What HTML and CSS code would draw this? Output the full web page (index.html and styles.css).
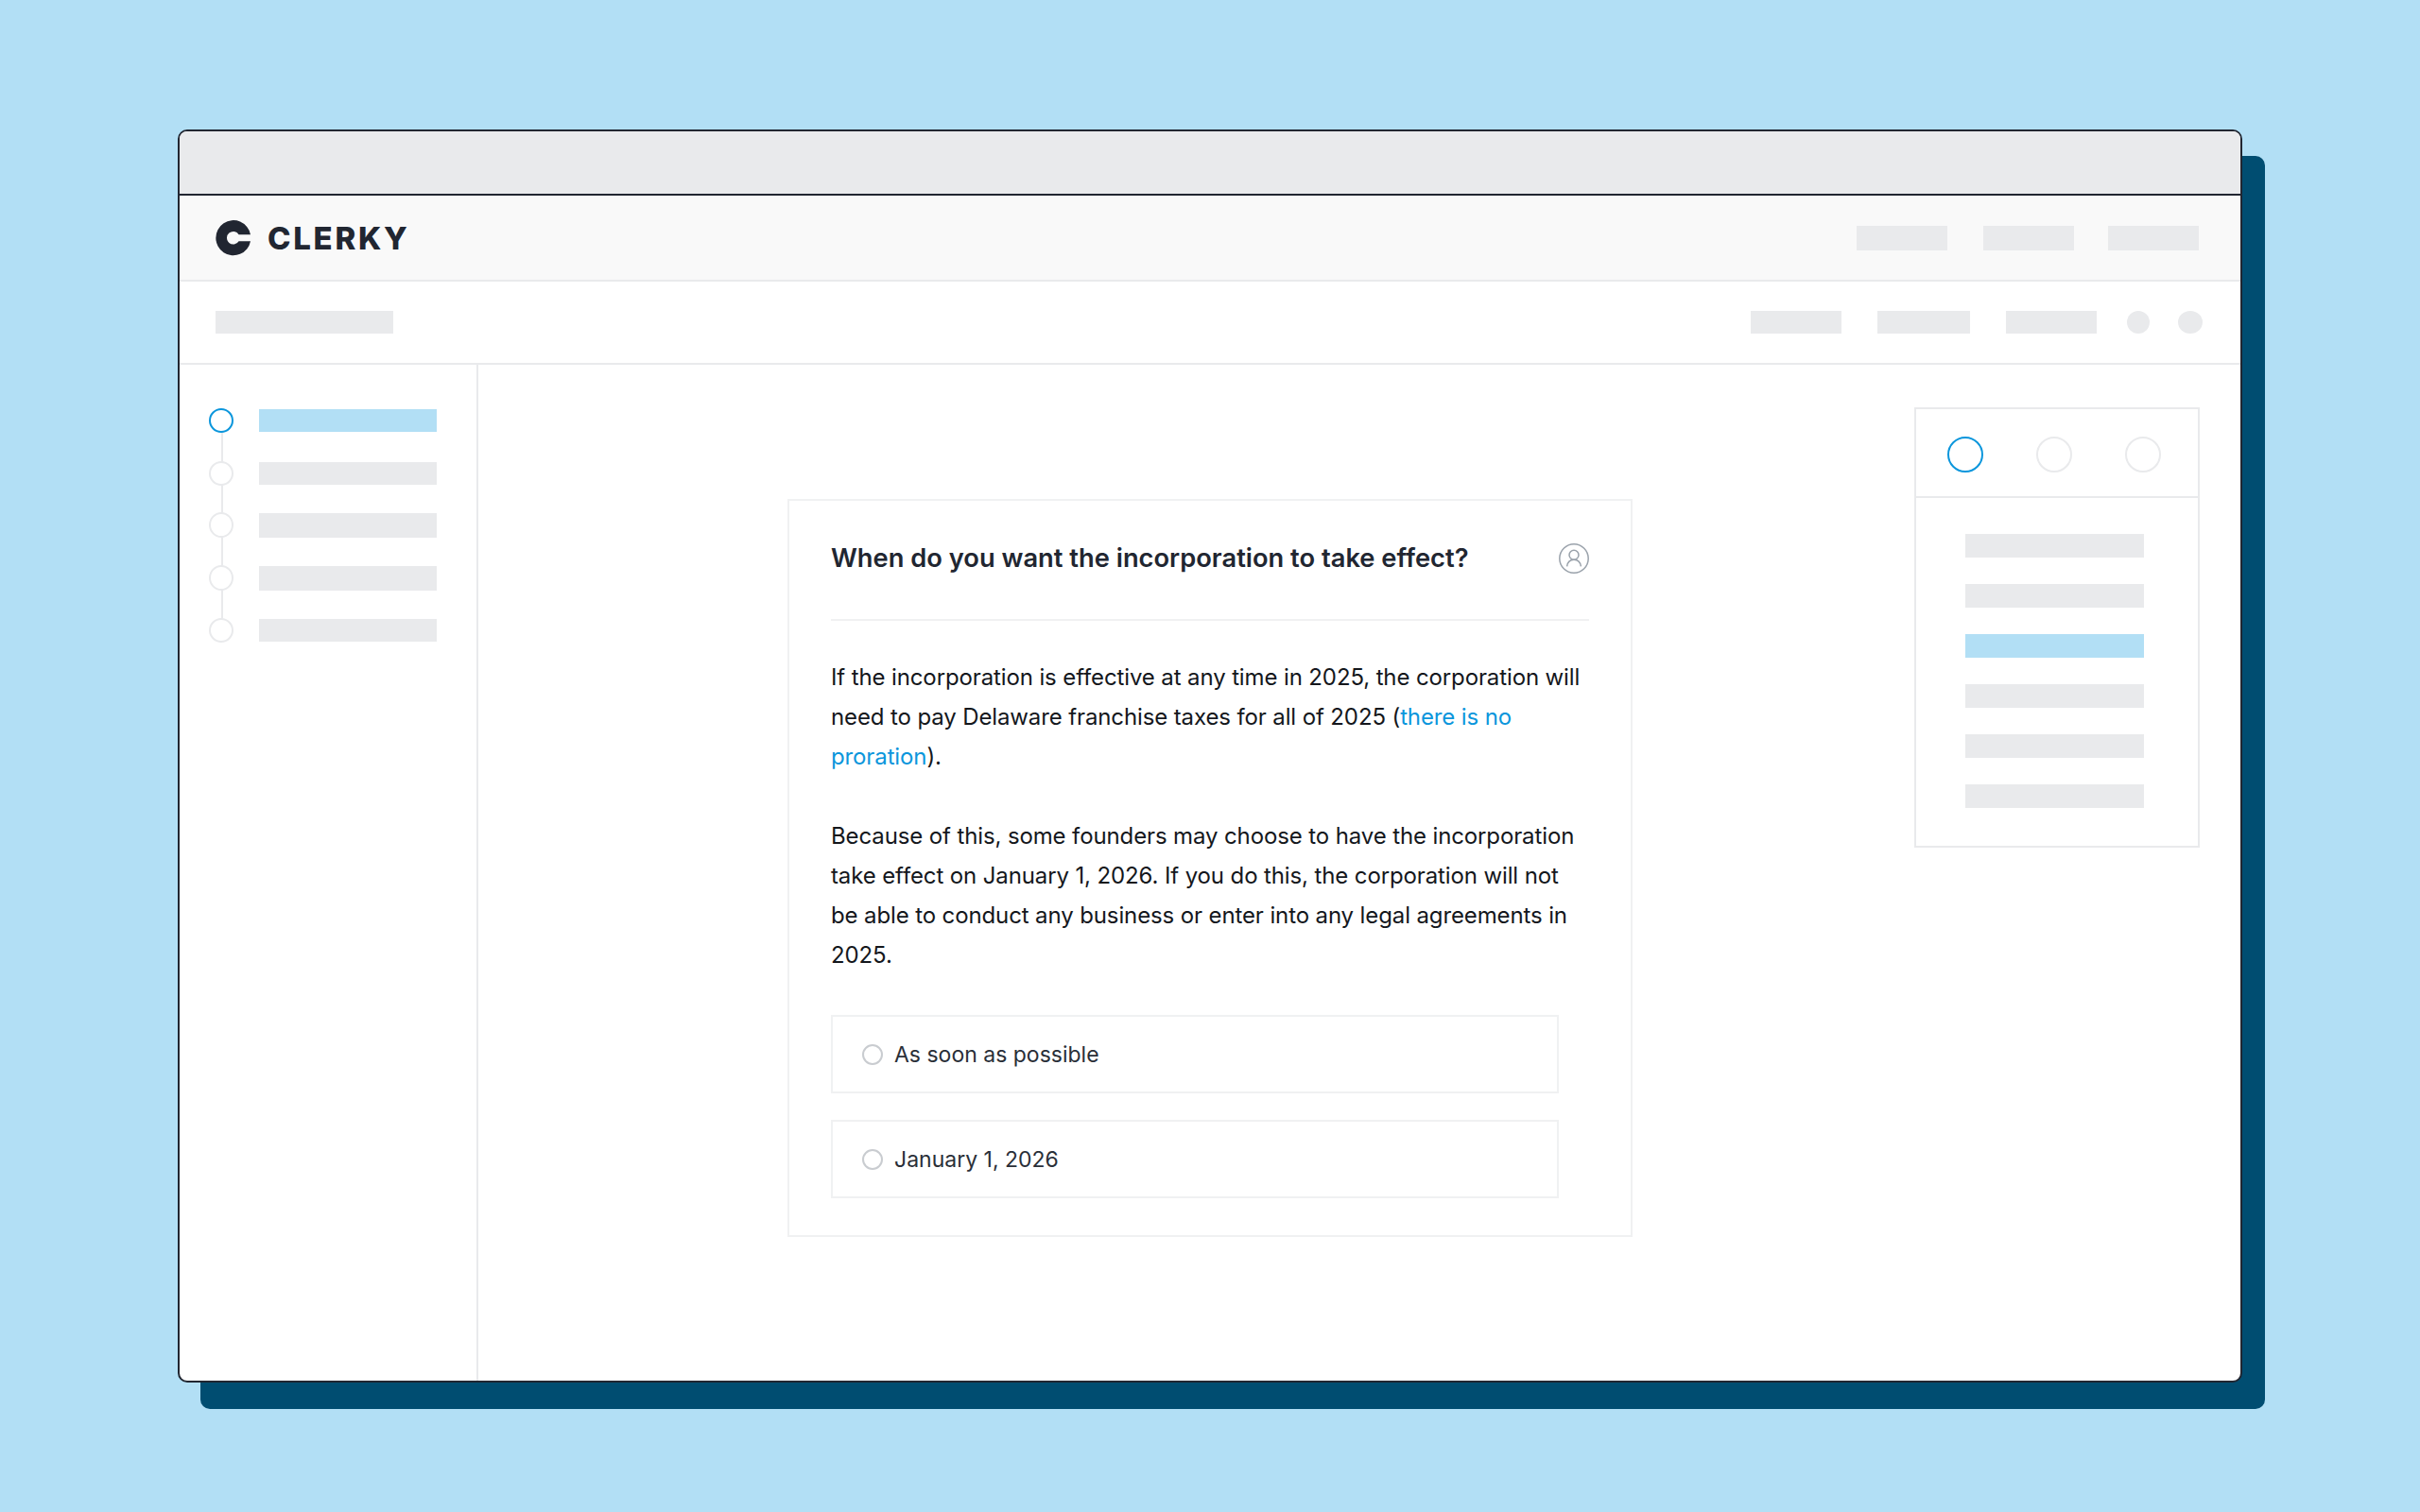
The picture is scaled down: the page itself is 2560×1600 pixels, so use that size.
FILE: index.html
```html
<!DOCTYPE html>
<html lang="en">
<head>
<meta charset="utf-8">
<title>Clerky</title>
<link rel="stylesheet" href="styles.css">
</head>
<body>
<div class="window">
  <div class="titlebar"></div>
  <header class="nav">
    <div class="brand">
      <svg class="logo" viewBox="0 0 37 38" width="37" height="38" aria-hidden="true">
        <path fill-rule="evenodd" d="M37 15.2A18.5 18.6 0 1 0 37 22.2H24.6A6.8 6.8 0 1 1 24.6 15.2Z" fill="#212631"/>
      </svg>
      <span class="wordmark">CLERKY</span>
    </div>
    <div class="nav-bars">
      <span class="bar bar-nav"></span>
      <span class="bar bar-nav"></span>
      <span class="bar bar-nav"></span>
    </div>
  </header>
  <div class="subnav">
    <span class="bar bar-crumb"></span>
    <div class="sub-bars">
      <span class="bar bar-sub"></span>
      <span class="bar bar-sub bar-sub-wide"></span>
      <span class="bar bar-sub"></span>
      <span class="dot"></span>
      <span class="dot dot-wide"></span>
    </div>
  </div>
  <main class="main">
    <aside class="sidebar">
      <div class="step"><span class="ring ring-active"></span><span class="bar bar-step bar-blue"></span></div>
      <div class="step step-short"><span class="ring"></span><span class="bar bar-step"></span></div>
      <div class="step"><span class="ring ring-tall"></span><span class="bar bar-step bar-tall"></span></div>
      <div class="step"><span class="ring ring-tall"></span><span class="bar bar-step bar-tall"></span></div>
      <div class="step step-last"><span class="ring"></span><span class="bar bar-step"></span></div>
    </aside>
    <section class="content">
      <article class="card">
        <div class="card-head">
          <h1 class="question">When do you want the incorporation to take effect?</h1>
          <svg class="person" viewBox="0 0 32 32" width="32" height="32" aria-hidden="true">
            <circle cx="16" cy="16" r="15.2" fill="none" stroke="#9aa2ab" stroke-width="1.5"/>
            <circle cx="16" cy="12.2" r="5" fill="none" stroke="#9aa2ab" stroke-width="1.5"/>
            <path d="M8.6 24.4c.6-4.6 3.4-7.2 7.4-7.2s6.8 2.6 7.4 7.2" fill="none" stroke="#9aa2ab" stroke-width="1.5"/>
          </svg>
        </div>
        <div class="copy">
          <p>If the incorporation is effective at any time in 2025, the corporation will need to pay Delaware franchise taxes for all of 2025 (<a class="link" href="#">there is no proration</a>).</p>
          <p>Because of this, some founders may choose to have the incorporation take effect on January 1, 2026. If you do this, the corporation will not be able to conduct any business or enter into any legal agreements in 2025.</p>
        </div>
        <div class="options">
          <div class="option"><span class="radio"></span><span>As soon as possible</span></div>
          <div class="option"><span class="radio"></span><span>January 1, 2026</span></div>
        </div>
      </article>
      <aside class="panel">
        <div class="panel-head">
          <span class="panel-ring panel-ring-active"></span>
          <span class="panel-ring"></span>
          <span class="panel-ring"></span>
        </div>
        <div class="panel-list">
          <span class="bar bar-panel"></span>
          <span class="bar bar-panel"></span>
          <span class="bar bar-panel bar-blue"></span>
          <span class="bar bar-panel"></span>
          <span class="bar bar-panel"></span>
          <span class="bar bar-panel"></span>
        </div>
      </aside>
    </section>
  </main>
</div>
</body>
</html>
```

FILE: styles.css
```css
* { box-sizing: border-box; }

html, body { margin: 0; padding: 0; }

body {
  width: 2560px;
  height: 1600px;
  padding: 137px 188px;
  background: #b2dff5;
  font-family: "Inter", "Noto Sans", sans-serif;
  overflow: hidden;
}

.window {
  display: flex;
  flex-direction: column;
  width: 2184px;
  height: 1326px;
  background: #fff;
  border: 2px solid #212631;
  border-radius: 10px;
  box-shadow: 24px 28px 0 #004d71;
  overflow: hidden;
}

.titlebar {
  flex: none;
  height: 68px;
  background: #e9eaec;
  border-bottom: 2px solid #212631;
}

.nav {
  flex: none;
  display: flex;
  align-items: center;
  justify-content: space-between;
  height: 91px;
  padding: 1px 44px 0 38px;
  background: #f9f9f9;
  border-bottom: 2px solid #e9eaec;
}

.brand { display: flex; align-items: center; gap: 18px; }

.logo { display: block; flex: none; }

.wordmark {
  font-size: 33px;
  line-height: 38px;
  font-weight: 800;
  letter-spacing: 2.7px;
  color: #212631;
}

.bar { display: block; flex: none; background: #e9eaec; }

.bar-blue { background: #b2dff5; }

.nav-bars { display: flex; gap: 36px; }

.bar-nav { width: 96px; height: 26px; }

.bar-nav:first-child { margin-right: 2px; }

.subnav {
  flex: none;
  display: flex;
  align-items: center;
  justify-content: space-between;
  height: 88px;
  padding: 0 40px 0 38px;
  border-bottom: 2px solid #e9eaec;
}

.bar-crumb { width: 188px; height: 24px; }

.sub-bars { display: flex; align-items: center; gap: 38px; }

.bar-sub { width: 96px; height: 24px; }

.bar-sub-wide { width: 98px; }

.dot {
  display: block;
  width: 24px;
  height: 24px;
  margin-left: -6px;
  border-radius: 50%;
  background: #e9eaec;
}

.dot-wide { width: 26px; margin-left: -8px; }

.main { flex: 1; display: flex; min-height: 0; }

.sidebar {
  flex: none;
  width: 316px;
  padding: 46px 0 0 31px;
  border-right: 2px solid #e9eaec;
}

.step {
  position: relative;
  display: flex;
  align-items: flex-start;
  gap: 27px;
  height: 56px;
}

.step-short { height: 54px; }

.step-last { height: 26px; }

.step:not(.step-last)::after {
  content: "";
  position: absolute;
  left: 13px;
  top: 24px;
  bottom: -2px;
  width: 2px;
  background: #e9eaec;
}

.ring {
  position: relative;
  z-index: 1;
  flex: none;
  width: 26px;
  height: 26px;
  background: #fff;
  border: 2px solid #e9eaec;
  border-radius: 50%;
}

.ring-active { border-color: #0b96dc; }

.ring-tall { height: 27px; width: 26px; }

.bar-step { width: 188px; height: 24px; margin-top: 1px; }

.bar-tall { height: 26px; margin-top: 1px; }

.content {
  flex: 1;
  display: flex;
  align-items: flex-start;
  justify-content: space-between;
  padding: 0 43px 0 327px;
}

.card {
  width: 894px;
  height: 781px;
  margin-top: 142px;
  padding: 0 44px;
  border: 2px solid #f0f1f2;
}

.card-head {
  display: flex;
  align-items: flex-start;
  justify-content: space-between;
  height: 127px;
  padding-top: 43px;
  border-bottom: 2px solid #f0f1f2;
}

.person { margin-top: 2px; }

.question {
  margin: 0;
  font-size: 27.3px;
  line-height: 36px;
  font-weight: 600;
  color: #212631;
}

.copy {
  margin-top: 39px;
  font-size: 24px;
  line-height: 42px;
  letter-spacing: -0.12px;
  color: #14171c;
}

.copy p { margin: 0 0 42px; }

.copy p:last-child { margin-bottom: 0; }

.link { color: #0b96dc; text-decoration: none; }

.options { margin-top: 42px; display: flex; flex-direction: column; gap: 28px; }

.option {
  display: flex;
  align-items: center;
  gap: 12px;
  width: 770px;
  height: 83px;
  padding-left: 31px;
  font-size: 23px;
  color: #2a2f38;
  border: 2px solid #f0f1f2;
}

.radio {
  flex: none;
  width: 22px;
  height: 22px;
  border: 2px solid #c9ccd0;
  border-radius: 50%;
}

.panel {
  flex: none;
  width: 302px;
  height: 466px;
  margin-top: 45px;
  border: 2px solid #e9eaec;
}

.panel-head {
  display: flex;
  align-items: center;
  gap: 56px;
  height: 94px;
  padding: 4px 0 0 33px;
  border-bottom: 2px solid #e9eaec;
}

.panel-ring {
  flex: none;
  width: 38px;
  height: 38px;
  border: 2px solid #e9eaec;
  border-radius: 50%;
}

.panel-ring-active { border-color: #0b96dc; }

.panel-list {
  display: flex;
  flex-direction: column;
  gap: 28px;
  padding: 38px 0 0 52px;
}

.bar-panel { width: 189px; height: 25px; }
```
